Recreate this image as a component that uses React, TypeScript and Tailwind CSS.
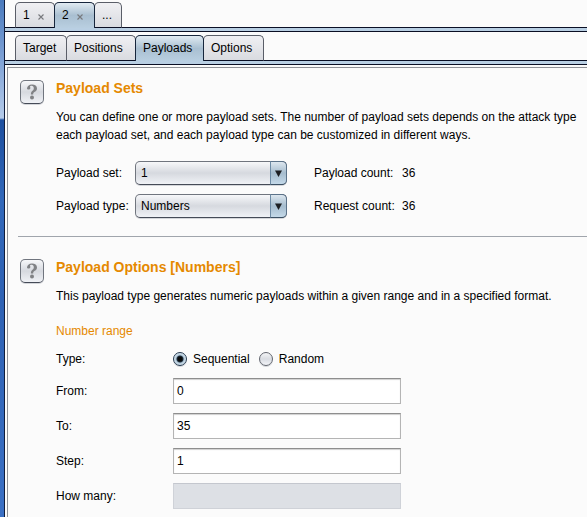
import type { ReactNode } from "react";

function Tab({
  active = false,
  closable = false,
  width,
  children,
}: {
  active?: boolean;
  closable?: boolean;
  width: string;
  children: ReactNode;
}) {
  return (
    <button
      type="button"
      role="tab"
      aria-selected={active}
      className={
        "relative -mr-px flex h-[26px] items-center rounded-t-[5px] border pl-[7px] whitespace-nowrap " +
        width +
        (active
          ? " z-10 border-b-0 border-[#17263c] bg-linear-to-b from-[#e1ebf2] via-[#a9bfd1] to-[#b9cfe1] pb-px"
          : " border-[#5a5e68] border-b-[#0a0f24] bg-linear-to-b from-[#f0f0f3] to-[#d9dbe0]")
      }
    >
      {children}
      {closable && (
        <svg viewBox="0 0 6 6" className="mt-1 ml-2 size-[6px]" aria-hidden="true">
          <path d="M.5 .5 5.5 5.5M5.5 .5 .5 5.5" stroke="#77797d" strokeWidth="1.1" />
        </svg>
      )}
    </button>
  );
}

function TabRow({ label, children }: { label: string; children: ReactNode }) {
  return (
    <div>
      <div role="tablist" aria-label={label} className="-mb-px flex pl-[10px]">
        {children}
      </div>
      <div className="h-[5px] border-y border-[#0a0f24] bg-[#b9cfe3]" />
    </div>
  );
}

function HelpButton() {
  return (
    <button
      type="button"
      aria-label="Help"
      className="flex size-6 shrink-0 items-center justify-center rounded-[5px] border border-[#70757e] border-b-[#454b57] bg-linear-to-b from-[#f7f8fa] via-[#d6d9df] to-[#f0f2f6] shadow-[0_1px_0_#d4d6da]"
    >
      <svg viewBox="0 0 12 16" className="h-4 w-3" aria-hidden="true">
        <path
          d="M1 4.800C1 2 3 .4 6 .4c3 0 5 1.500 5 4 0 2-1.200 2.900-2.600 3.700C7.400 8.700 7.200 9.200 7.200 10.600H4.900c0-2.100.4-3 1.600-3.900C7.400 6 7.800 5.500 7.800 4.300 7.800 2.700 7 1.700 5.600 1.700 4.700 1.700 4 2 4 2.500c0 .5.4.8.4 1.500C4.400 4.900 3.700 5.500 2.700 5.500 1.700 5.500 1 5.200 1 4.800Z"
          fill="#808285"
        />
        <circle cx="6" cy="13.500" r="2" fill="#808285" />
      </svg>
    </button>
  );
}

function Section({ title, children }: { title: string; children: ReactNode }) {
  return (
    <section className="flex gap-3 pl-3">
      <HelpButton />
      <div className="min-w-0 flex-1">
        <h2 className="text-[14px] leading-4 font-bold text-[#e58900]">{title}</h2>
        {children}
      </div>
    </section>
  );
}

function SelectRow({
  id,
  label,
  value,
  countLabel,
  count,
}: {
  id: string;
  label: string;
  value: string;
  countLabel: string;
  count: string;
}) {
  return (
    <div className="flex h-6 items-center whitespace-nowrap">
      <label htmlFor={id} className="w-[79px] shrink-0">
        {label}
      </label>
      <div className="relative h-6 w-[152px] shrink-0">
        <select
          id={id}
          defaultValue={value}
          className="size-full appearance-none rounded-[5px] border border-[#70757e] border-b-[#454b57] bg-linear-to-b from-[#f7f8fa] via-[#d6d9df] to-[#f0f2f6] pl-[5px] shadow-[0_1px_0_#d4d6da]"
        >
          <option>{value}</option>
        </select>
        <span className="pointer-events-none absolute inset-y-0 right-0 flex w-[17px] items-center justify-center rounded-r-[5px] border border-[#5b7289] border-b-[#3b5064] border-l-[#6e8ba5] bg-linear-to-b from-[#dde7ef] via-[#a5bcce] to-[#c4d9e9]">
          <svg viewBox="0 0 7 7" className="size-[7px]" aria-hidden="true">
            <path d="M0 0.500H7L3.500 7Z" fill="#1c1e22" />
          </svg>
        </span>
      </div>
      <span className="ml-[27px] w-[88px] shrink-0">{countLabel}</span>
      <span>{count}</span>
    </div>
  );
}

function TypeRadio({ label, checked = false }: { label: string; checked?: boolean }) {
  return (
    <label className="flex items-center gap-[6px]">
      <input
        type="radio"
        name="range-type"
        defaultChecked={checked}
        className="size-[14px] appearance-none rounded-full border border-[#62666f] bg-linear-to-b from-[#f4f5f7] via-[#d9dce2] to-[#f3f4f8] shadow-[0_1px_0_#d4d6da] checked:border-[#24384e] checked:bg-[radial-gradient(circle,#080808_0_2px,#20303f_3px,#b0c7d8_4px,#d7e5ef_6px)]"
      />
      {label}
    </label>
  );
}

function FieldRow({
  id,
  label,
  value = "",
  disabled = false,
}: {
  id: string;
  label: string;
  value?: string;
  disabled?: boolean;
}) {
  return (
    <div className="flex h-[26px] items-center">
      <label htmlFor={id} className="w-[117px] shrink-0">
        {label}
      </label>
      <input
        id={id}
        type="text"
        defaultValue={value}
        disabled={disabled}
        className="h-[26px] w-[228px] border border-[#b4b4b4] border-t-[#8e8e8e] bg-white px-[3px] shadow-[inset_0_1px_1px_#d0d0d0] disabled:border-[#cfd2d8] disabled:border-t-[#c4c7ce] disabled:bg-[#dde0e5] disabled:shadow-none"
      />
    </div>
  );
}

export default function App() {
  return (
    <div className="flex min-h-screen overflow-hidden bg-[#fbfbfb] font-['Liberation_Sans',Arial,sans-serif] text-[12px] leading-[18px] text-black">
      <div className="w-[5px] shrink-0 border-r border-[#101d3c] bg-[linear-gradient(to_bottom,#4a7abd_0,#7fa2d6_60px,#b5cbea_118px,#1d4f9f_120px,#3268ba_200px,#2f62b4_300px,#3b70c4_100%)]" />
      <div className="flex min-w-0 flex-1 flex-col pt-[2px]">
        <TabRow label="Attacks">
          <Tab width="w-10" closable>
            1
          </Tab>
          <Tab width="w-[41px]" active closable>
            2
          </Tab>
          <Tab width="w-7">...</Tab>
        </TabRow>
        <div className="pt-[3px]">
          <TabRow label="Attack settings">
            <Tab width="w-[52px]">Target</Tab>
            <Tab width="w-[70px]">Positions</Tab>
            <Tab width="w-[69px]" active>
              Payloads
            </Tab>
            <Tab width="w-[61px]">Options</Tab>
          </TabRow>
        </div>

        <main className="mt-[2px] ml-[2px] flex-1 border-t border-l border-[#8f9196] pt-3 pb-2">
          <Section title="Payload Sets">
            <p className="mt-3 whitespace-nowrap">
              You can define one or more payload sets. The number of payload sets depends on the attack type
              <br />
              each payload set, and each payload type can be customized in different ways.
            </p>
            <div className="mt-[17px] flex flex-col gap-[9px]">
              <SelectRow id="payload-set" label="Payload set:" value="1" countLabel="Payload count:" count="36" />
              <SelectRow id="payload-type" label="Payload type:" value="Numbers" countLabel="Request count:" count="36" />
            </div>
          </Section>

          <hr className="mt-[18px] mb-[22px] ml-[10px] border-[#a0a5ac]" />

          <Section title="Payload Options [Numbers]">
            <p className="mt-3 whitespace-nowrap">
              This payload type generates numeric payloads within a given range and in a specified format.
            </p>
            <h3 className="mt-[17px] text-[#e58900]">Number range</h3>
            <div role="radiogroup" aria-labelledby="type-label" className="mt-[10px] flex items-center">
              <span id="type-label" className="w-[117px] shrink-0">
                Type:
              </span>
              <div className="flex gap-[9px]">
                <TypeRadio label="Sequential" checked />
                <TypeRadio label="Random" />
              </div>
            </div>
            <div className="mt-[10px] flex flex-col gap-[9px]">
              <FieldRow id="from" label="From:" value="0" />
              <FieldRow id="to" label="To:" value="35" />
              <FieldRow id="step" label="Step:" value="1" />
              <FieldRow id="how-many" label="How many:" disabled />
            </div>
          </Section>
        </main>
      </div>
    </div>
  );
}
